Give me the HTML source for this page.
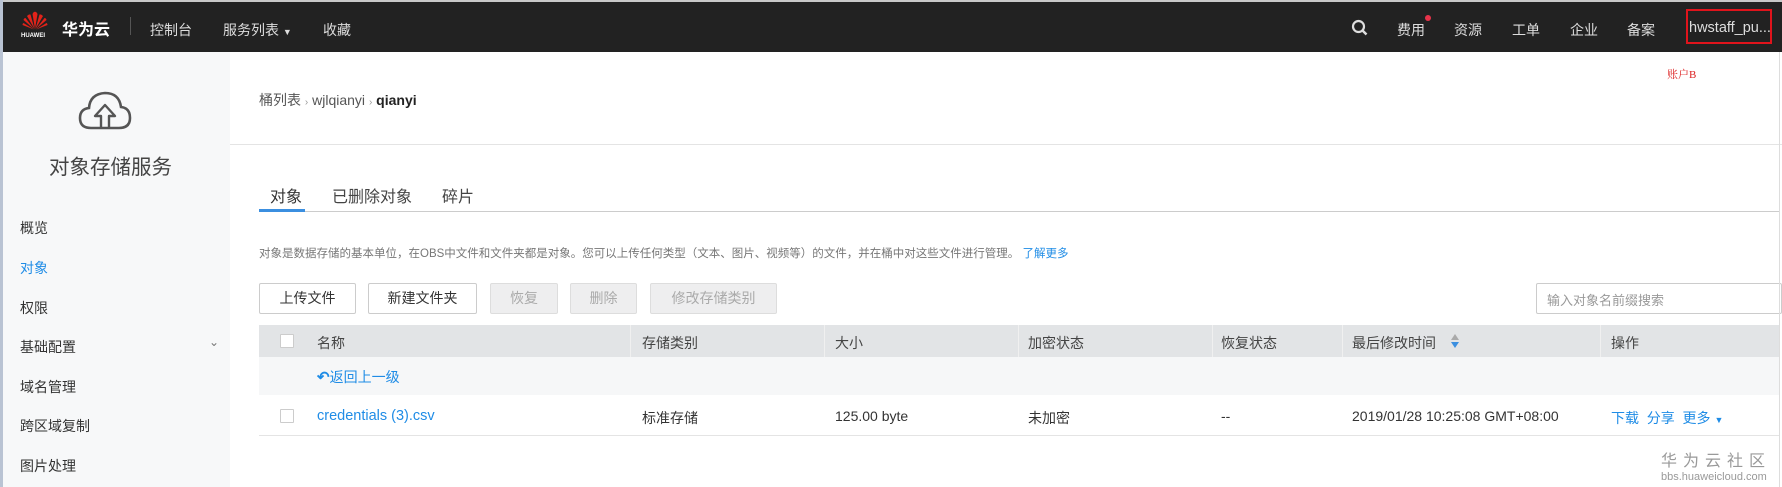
<!DOCTYPE html>
<html><head><meta charset="utf-8">
<style>
*{margin:0;padding:0;box-sizing:border-box}
body{width:1782px;height:487px;overflow:hidden;background:#fff;font-family:"Liberation Sans","Noto Sans CJK SC",sans-serif;color:#333;position:relative}
.abs{position:absolute;white-space:nowrap}
#top{position:absolute;left:0;top:0;width:1782px;height:52px;background:#222;border-top:2px solid #c8c8c8}
#lb{position:absolute;left:0;top:0;width:3px;height:487px;background:#b9c3d3;z-index:5}
.nav{color:#ddd;font-size:14px;top:18px}
#side{position:absolute;left:3px;top:52px;width:227px;height:435px;background:#f7f8f9}
.si{font-size:14px;color:#333;left:17px}
.btn{position:absolute;top:283px;height:31px;border:1px solid #ccc;border-radius:2px;font-size:14px;text-align:center;line-height:29px;background:#fff;color:#333}
.dis{background:#eeeeef;color:#aaa;border-color:#ddd}
.th{font-size:14px;color:#444;top:333px}
.vd{position:absolute;top:325px;width:1px;height:32px;background:#f0f0f0}
.td{font-size:14px;color:#333;top:408px}
.cb{position:absolute;width:14px;height:14px;border:1px solid #ccc;background:#fff;border-radius:1px}
</style></head><body>
<div id="lb"></div>
<div id="top">
 <svg class="abs" style="left:22px;top:9px" width="26" height="20" viewBox="0 0 26 20">
  <g fill="#e2231a">
   <path d="M13 18 L10.5 3 Q12 0 13 1 Z"/><path d="M13 18 L15.5 3 Q14 0 13 1 Z"/>
   <path d="M12.5 18 L5 5 Q7 3 8.5 3.5 Z"/><path d="M13.5 18 L21 5 Q19 3 17.5 3.5 Z"/>
   <path d="M12 18 L1.5 9 Q2 7 3.5 7 Z"/><path d="M14 18 L24.5 9 Q24 7 22.5 7 Z"/>
   <path d="M12 18.5 L0.5 14 Q0.5 12.5 1.5 12 Z"/><path d="M14 18.5 L25.5 14 Q25.5 12.5 24.5 12 Z"/>
  </g></svg>
 <div class="abs" style="left:21px;top:31px;color:#fff;font-size:6px;font-weight:bold">HUAWEI</div>
 <div class="abs" style="left:62px;top:14px;color:#fff;font-size:16px;font-weight:bold">华为云</div>
 <div class="abs" style="left:130px;top:15px;width:1px;height:18px;background:#555"></div>
 <div class="abs nav" style="left:150px">控制台</div>
 <div class="abs nav" style="left:223px">服务列表 <span style="font-size:9px">▼</span></div>
 <div class="abs nav" style="left:323px">收藏</div>
 <svg class="abs" style="left:1351px;top:17px" width="18" height="18" viewBox="0 0 18 18"><circle cx="7.5" cy="7.5" r="5.5" fill="none" stroke="#ddd" stroke-width="2.2"/><path d="M11.5 11.5 L15.5 15.5" stroke="#ddd" stroke-width="2.5"/></svg>
 <div class="abs nav" style="left:1397px">费用</div>
 <div class="abs" style="left:1425px;top:13px;width:6px;height:6px;border-radius:3px;background:#e8334a"></div>
 <div class="abs nav" style="left:1454px">资源</div>
 <div class="abs nav" style="left:1512px">工单</div>
 <div class="abs nav" style="left:1570px">企业</div>
 <div class="abs nav" style="left:1627px">备案</div>
 <div class="abs" style="left:1686px;top:7px;width:86px;height:35px;border:2px solid #e0141c"></div>
 <div class="abs nav" style="left:1689px;top:18px;color:#ddd;font-size:14.5px">hwstaff_pu...</div>
</div>
<div class="abs" style="left:1667px;top:66px;color:#d22;font-size:11px;font-family:'Liberation Serif','Noto Serif CJK SC',serif">账户B</div>

<div id="side">
 <svg class="abs" style="left:74px;top:36px" width="56" height="44" viewBox="0 0 56 44"><path d="M14 40 Q3 40 3 30 Q3 21 12 20 Q13 6 28 5 Q42 5 44 19 Q53 20 53 30 Q53 40 42 40 Z" fill="none" stroke="#555" stroke-width="2.6"/><path d="M24 40 V28 H18 L28 17 L38 28 H32 V40" fill="none" stroke="#555" stroke-width="2.4" stroke-linejoin="round"/></svg>
 <div class="abs" style="left:46px;top:98px;font-size:20.5px;color:#444">对象存储服务</div>
 <div class="abs si" style="top:166px">概览</div>
 <div class="abs si" style="top:206px;color:#1f8ce6">对象</div>
 <div class="abs si" style="top:246px">权限</div>
 <div class="abs si" style="top:285px">基础配置</div>
 <div class="abs" style="left:206px;top:283px;color:#777;font-size:12px">&#8964;</div>
 <div class="abs si" style="top:325px">域名管理</div>
 <div class="abs si" style="top:364px">跨区域复制</div>
 <div class="abs si" style="top:404px">图片处理</div>
</div>

<div class="abs" style="left:259px;top:90px;font-size:14px;color:#555">桶列表 <span style="color:#999;font-size:10px">›</span> wjlqianyi <span style="color:#999;font-size:10px">›</span> <b style="color:#222">qianyi</b></div>
<div class="abs" style="left:230px;top:144px;width:1552px;height:1px;background:#e4e4e4"></div>

<div class="abs" style="left:270px;top:183px;font-size:16px;color:#333">对象</div>
<div class="abs" style="left:332px;top:183px;font-size:16px;color:#444">已删除对象</div>
<div class="abs" style="left:442px;top:183px;font-size:16px;color:#444">碎片</div>
<div class="abs" style="left:259px;top:211px;width:1521px;height:1px;background:#ccc"></div>
<div class="abs" style="left:259px;top:209px;width:46px;height:3px;background:#3b8fe0"></div>

<div class="abs" style="left:259px;top:245px;font-size:11.5px;color:#777">对象是数据存储的基本单位，在OBS中文件和文件夹都是对象。您可以上传任何类型（文本、图片、视频等）的文件，并在桶中对这些文件进行管理。 <span style="color:#1f8ce6">了解更多</span></div>

<div class="btn" style="left:259px;width:97px">上传文件</div>
<div class="btn" style="left:368px;width:109px">新建文件夹</div>
<div class="btn dis" style="left:490px;width:68px">恢复</div>
<div class="btn dis" style="left:570px;width:67px">删除</div>
<div class="btn dis" style="left:650px;width:127px">修改存储类别</div>
<div class="abs" style="left:1536px;top:283px;width:246px;height:31px;border:1px solid #ccc;border-radius:2px;font-size:13px;color:#999;padding:6px 0 0 10px">输入对象名前缀搜索</div>

<div class="abs" style="left:259px;top:325px;width:1521px;height:32px;background:#e2e4e6"></div>
<div class="vd" style="left:630px"></div><div class="vd" style="left:824px"></div><div class="vd" style="left:1018px"></div><div class="vd" style="left:1212px"></div><div class="vd" style="left:1342px"></div><div class="vd" style="left:1600px"></div>
<div class="cb" style="left:280px;top:334px"></div>
<div class="abs th" style="left:317px">名称</div>
<div class="abs th" style="left:642px">存储类别</div>
<div class="abs th" style="left:835px">大小</div>
<div class="abs th" style="left:1028px">加密状态</div>
<div class="abs th" style="left:1221px">恢复状态</div>
<div class="abs th" style="left:1352px">最后修改时间</div>
<svg class="abs" style="left:1450px;top:333px" width="10" height="16" viewBox="0 0 10 16"><path d="M5 1 L9 7 H1 Z" fill="#aaa"/><path d="M5 15 L9 9 H1 Z" fill="#3b8fe0"/></svg>
<div class="abs th" style="left:1611px">操作</div>

<div class="abs" style="left:259px;top:357px;width:1521px;height:38px;background:#f6f7f8"></div>
<div class="abs" style="left:317px;top:367px;font-size:14px;color:#1f8ce6"><b style="font-size:15px">&#8630;</b>返回上一级</div>

<div class="cb" style="left:280px;top:409px"></div>
<div class="abs td" style="left:317px;color:#1f8ce6;font-size:14.5px">credentials (3).csv</div>
<div class="abs td" style="left:642px">标准存储</div>
<div class="abs td" style="left:835px">125.00 byte</div>
<div class="abs td" style="left:1028px">未加密</div>
<div class="abs td" style="left:1221px">--</div>
<div class="abs td" style="left:1352px">2019/01/28 10:25:08 GMT+08:00</div>
<div class="abs td" style="left:1611px;color:#1f8ce6">下载 &nbsp;分享 &nbsp;更多 <span style="font-size:9px">▼</span></div>
<div class="abs" style="left:259px;top:435px;width:1521px;height:1px;background:#e4e4e4"></div>
<div class="abs" style="left:1779px;top:52px;width:1px;height:435px;background:#ddd"></div>

<div class="abs" style="left:1661px;top:447px;font-size:16px;color:#999;letter-spacing:6px">华为云社区</div>
<div class="abs" style="left:1661px;top:471px;font-size:11px;color:#999">bbs.huaweicloud.com</div>
</body></html>
